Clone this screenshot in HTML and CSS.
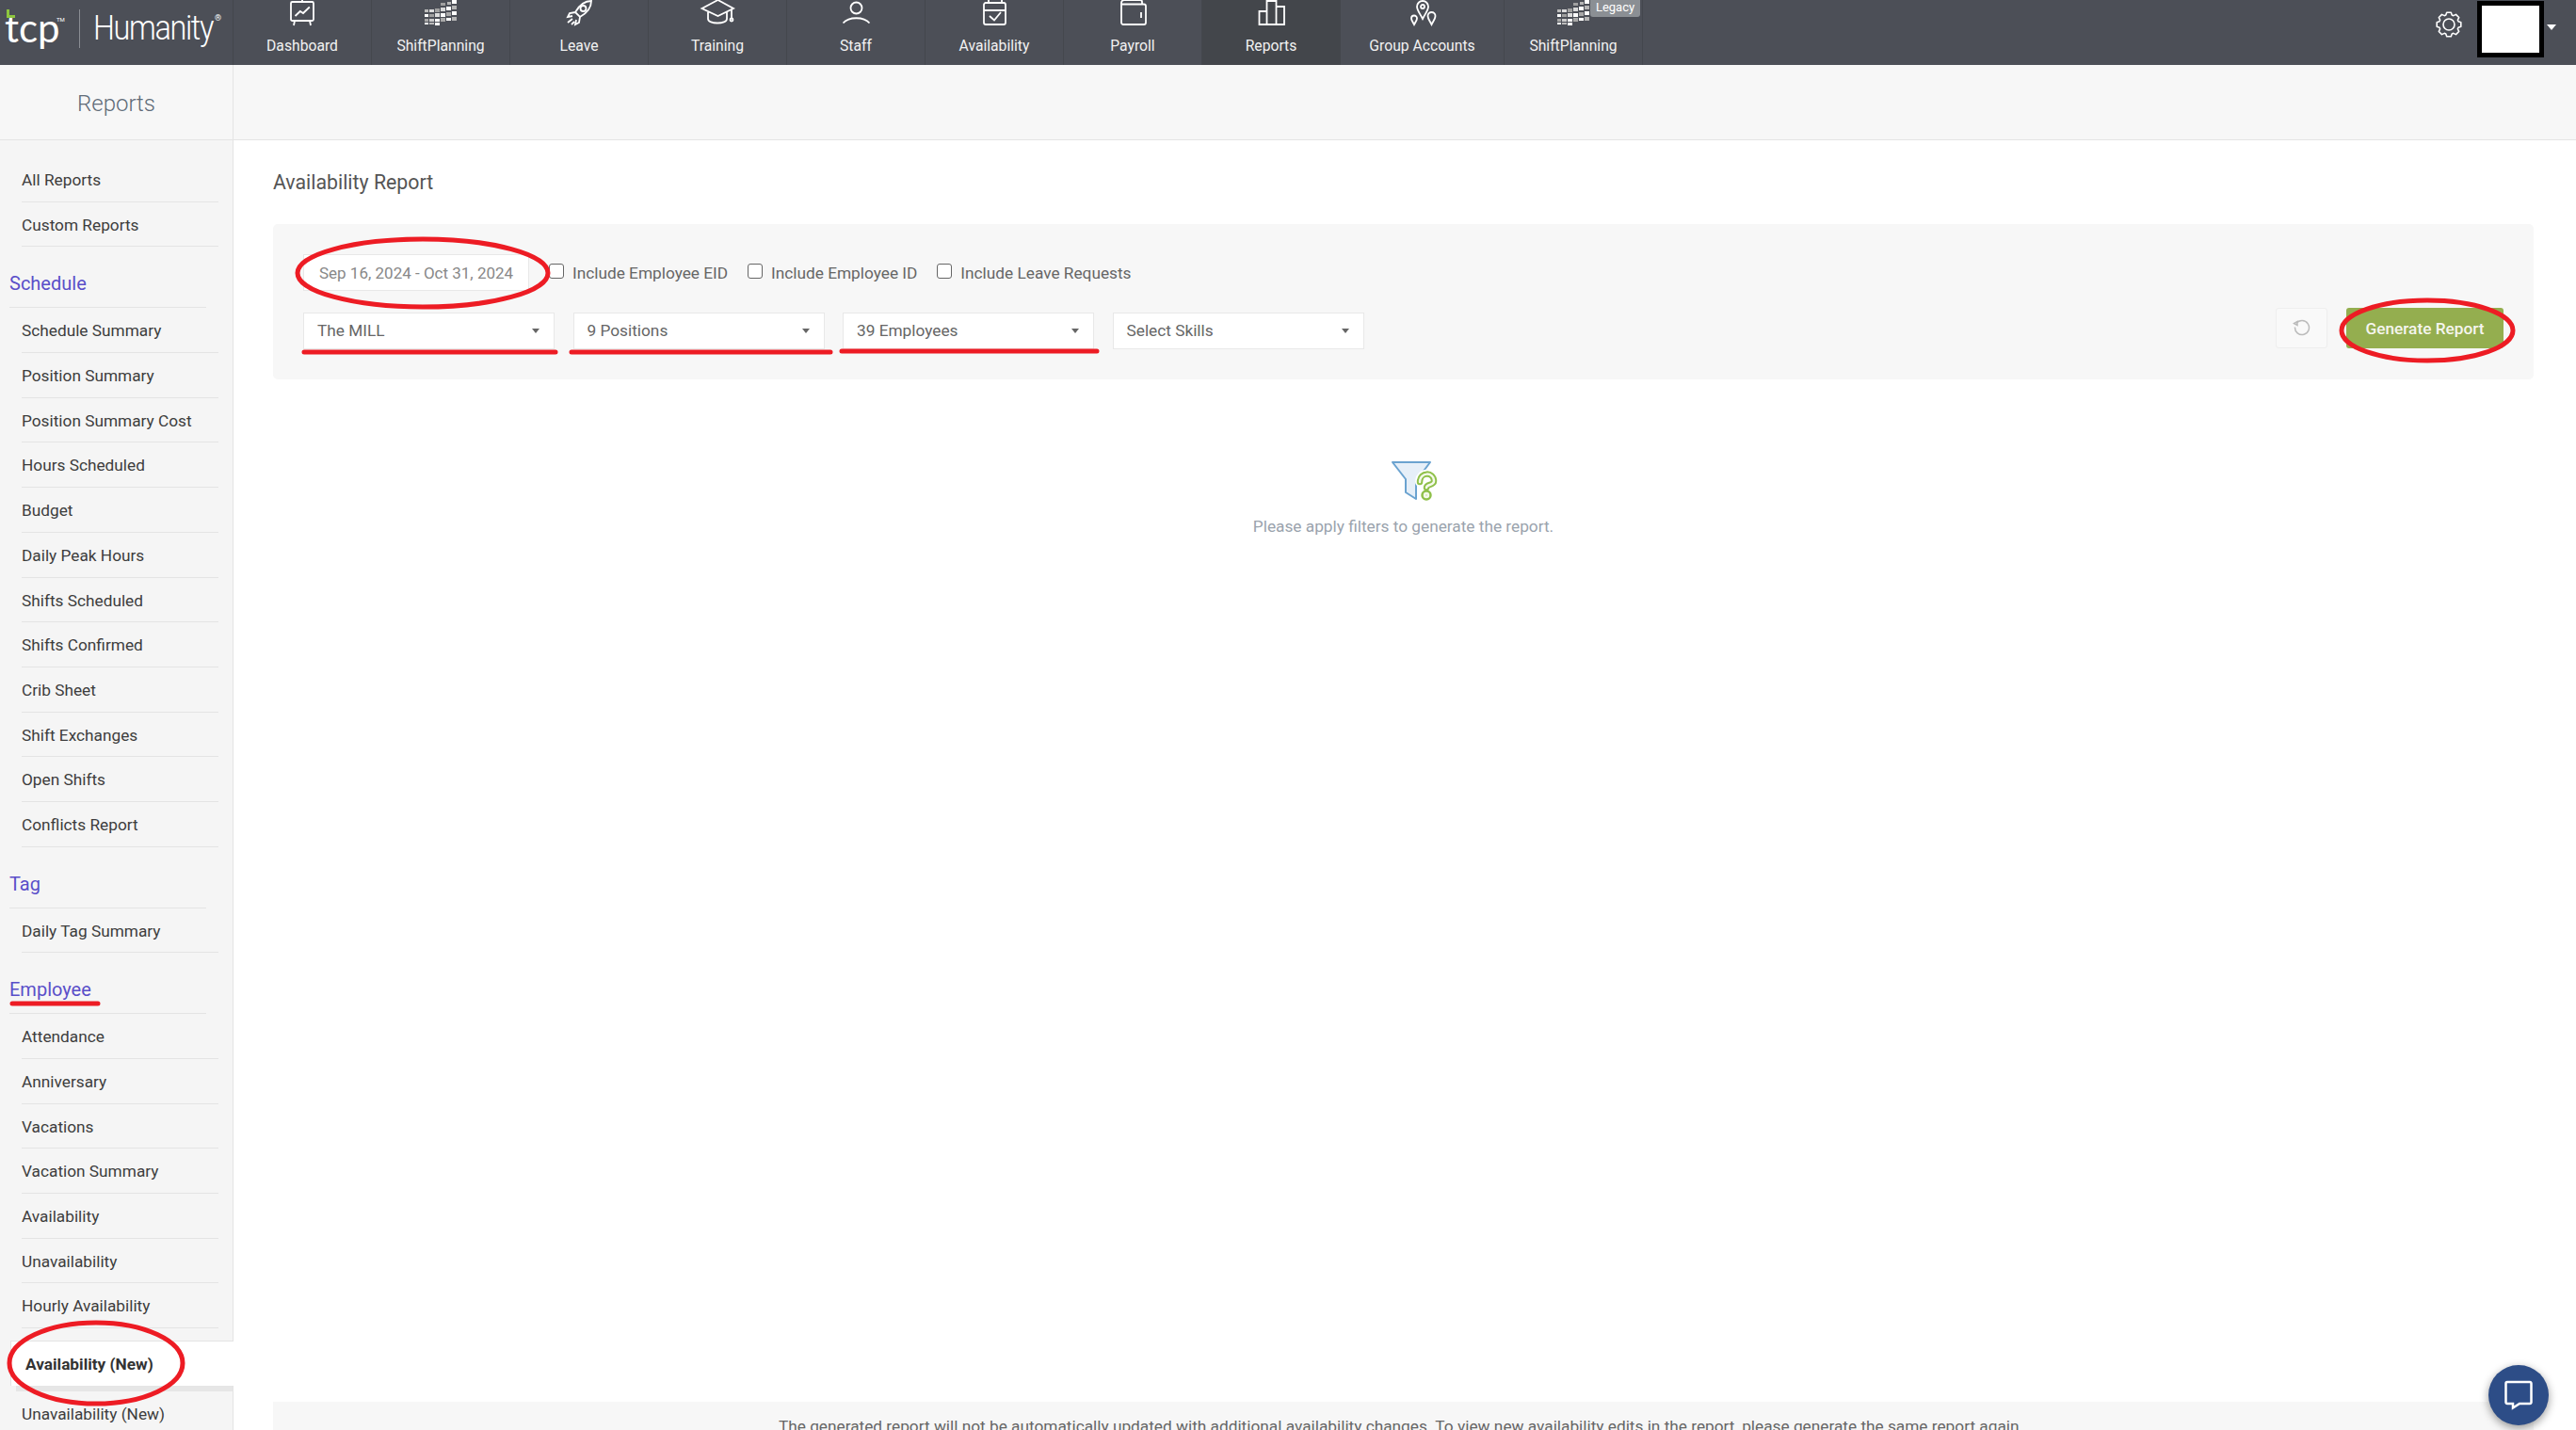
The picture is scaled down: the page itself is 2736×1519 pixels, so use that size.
FILE: index.html
```html
<!DOCTYPE html>
<html lang="en">
<head>
    <meta charset="UTF-8">
    <meta name="viewport" content="width=device-width, initial-scale=1.0">
    <title>Availability Report</title>
    <link rel="stylesheet" href="styles.css">
</head>
<body>
    <!-- shared block grid for both ShiftPlanning icons -->
    <svg class="defs" width="0" height="0">
        <symbol id="blocks" viewBox="0 0 40 28">
            <g fill="#fff">
                <rect x="32" y="0" width="5" height="4"/><rect x="27" y="2" width="4" height="3" fill="#b5b5b5"/>
                <rect x="20" y="3" width="5" height="3" fill="#a0a0a0"/>
                <rect x="32" y="6" width="5" height="4" fill="#b5b5b5"/><rect x="26" y="7" width="5" height="4"/>
                <rect x="20" y="8" width="5" height="4" fill="#d8d8d8"/><rect x="14" y="9" width="5" height="4" fill="#a0a0a0"/>
                <rect x="8" y="10" width="5" height="3" fill="#ddd"/><rect x="3" y="10" width="4" height="3" fill="#bbb"/>
                <rect x="32" y="12" width="5" height="4"/><rect x="26" y="13" width="5" height="4" fill="#a8a8a8"/>
                <rect x="20" y="14" width="5" height="4"/><rect x="14" y="14" width="5" height="4" fill="#ddd"/>
                <rect x="8" y="15" width="5" height="3" fill="#a0a0a0"/><rect x="3" y="15" width="4" height="3"/>
                <rect x="32" y="18" width="5" height="4" fill="#b5b5b5"/><rect x="26" y="19" width="5" height="3"/>
                <rect x="20" y="19" width="5" height="4" fill="#a8a8a8"/><rect x="14" y="20" width="5" height="3"/>
                <rect x="8" y="20" width="5" height="3" fill="#ccc"/><rect x="3" y="20" width="4" height="3" fill="#a8a8a8"/>
                <rect x="14" y="24" width="5" height="3"/><rect x="8" y="24" width="5" height="2" fill="#bbb"/>
                <rect x="3" y="24" width="4" height="2"/>
            </g>
        </symbol>
    </svg>

    <header class="topbar">
        <a class="logo">
            <span class="logo-tcp">tcp</span><span class="logo-tm">TM</span>
            <span class="logo-mark"></span>
            <span class="logo-line"></span>
            <span class="logo-name">Humanity</span><span class="logo-reg">®</span>
        </a>
        <nav class="mainnav">
            <a class="nav-item">
                <svg class="nav-icon" viewBox="0 0 40 28"><path d="M20 0v2M9.5 2h21a1.5 1.5 0 0 1 1.5 1.5v17a1.5 1.5 0 0 1-1.5 1.5h-21a1.5 1.5 0 0 1-1.5-1.5v-17a1.5 1.5 0 0 1 1.500-1.500zM12 22l-1 5M28 22l1 5M12.500 17l5.300-5 3.200 2 6.800-6.500"/></svg>
                <span>Dashboard</span>
            </a>
            <a class="nav-item">
                <svg class="nav-icon nav-blocks"><use href="#blocks"/></svg>
                <span>ShiftPlanning</span>
            </a>
            <a class="nav-item">
                <svg class="nav-icon" viewBox="0 0 40 28"><path d="M33 1c-7 0-13 5-17 12l5 5c7-4 12-10 12-17zM16 13l-6 1-2 4 5-1M21 18l-1 6-4 2 1-5M8 24l5-4M12 26l3-3"/><circle cx="24.500" cy="9" r="3"/></svg>
                <span>Leave</span>
            </a>
            <a class="nav-item">
                <svg class="nav-icon" viewBox="0 0 40 28"><path d="M3.500 9L20.500 0 37 9l-16.500 8zM10 13v7c0 6 20 6 20 0v-7M35 10v9"/><circle cx="35" cy="21" r="1.500"/></svg>
                <span>Training</span>
            </a>
            <a class="nav-item">
                <svg class="nav-icon" viewBox="0 0 40 28"><circle cx="20.500" cy="8.500" r="6"/><path d="M6.500 24.500c6-7 22-7 28 0"/></svg>
                <span>Staff</span>
            </a>
            <a class="nav-item">
                <svg class="nav-icon" viewBox="0 0 40 28"><path d="M11 3h19a2 2 0 0 1 2 2v19a2 2 0 0 1-2 2H11a2 2 0 0 1-2-2V5a2 2 0 0 1 2-2zM9 11h23M14 3V0M28 3V0M15 17l5 4.500 7-8.500"/></svg>
                <span>Availability</span>
            </a>
            <a class="nav-item">
                <svg class="nav-icon" viewBox="0 0 40 28"><path d="M8 4.500h24a2 2 0 0 1 2 2V24a2 2 0 0 1-2 2H10a2 2 0 0 1-2-2V3a3 3 0 0 1 3-3h17a2 2 0 0 1 2 2v2.500M29 13v6"/></svg>
                <span>Payroll</span>
            </a>
            <a class="nav-item active">
                <svg class="nav-icon" viewBox="0 0 40 28"><path d="M7.500 12h8v14h-8zM15.500 1h10v25h-10zM25.500 7H34v19h-8.500z"/></svg>
                <span>Reports</span>
            </a>
            <a class="nav-item wide">
                <svg class="nav-icon" viewBox="0 0 40 28"><path d="M20 20c-3-6-6-9-6-13a6 6 0 0 1 12 0c0 4-3 7-6 13zM11 26c-1.500-3-3-4.500-3-6.500a3 3 0 0 1 6 0c0 2-1.500 3.500-3 6.500zM29.500 26c-2-4-4-6-4-9a4 4 0 0 1 8 0c0 3-2 5-4 9z"/><circle cx="20" cy="7" r="2"/></svg>
                <span>Group Accounts</span>
            </a>
            <a class="nav-item">
                <svg class="nav-icon nav-blocks"><use href="#blocks"/></svg>
                <span>ShiftPlanning</span>
                <em class="legacy">Legacy</em>
            </a>
        </nav>
        <div class="user-tools">
            <svg class="gear" viewBox="-15 -15 30 30"><path d="M2.260-12.800L3.240-9.990 4.770-9.360 7.460-10.650 10.650-7.460 9.360-4.770 9.990-3.240 12.800-2.260V2.260L9.990 3.240 9.360 4.770 10.650 7.460 7.460 10.650 4.770 9.360 3.240 9.990 2.260 12.800H-2.260L-3.240 9.990-4.770 9.360-7.460 10.650-10.650 7.460-9.360 4.770-9.990 3.240-12.800 2.260V-2.260L-9.990-3.240-9.360-4.770-10.650-7.460-7.460-10.650-4.770-9.360-3.240-9.990-2.260-12.800z"/><circle r="6"/></svg>
            <div class="avatar"></div>
            <span class="user-caret"></span>
        </div>
    </header>

    <div class="subbar">
        <div class="subbar-title">Reports</div>
    </div>

    <div class="layout">
        <aside class="sidebar">
            <ul class="side-list">
                <li>All Reports</li>
                <li>Custom Reports</li>
            </ul>
            <h3 class="side-head">Schedule</h3>
            <ul class="side-list">
                <li>Schedule Summary</li>
                <li>Position Summary</li>
                <li>Position Summary Cost</li>
                <li>Hours Scheduled</li>
                <li>Budget</li>
                <li>Daily Peak Hours</li>
                <li>Shifts Scheduled</li>
                <li>Shifts Confirmed</li>
                <li>Crib Sheet</li>
                <li>Shift Exchanges</li>
                <li>Open Shifts</li>
                <li>Conflicts Report</li>
            </ul>
            <h3 class="side-head">Tag</h3>
            <ul class="side-list">
                <li>Daily Tag Summary</li>
            </ul>
            <h3 class="side-head">Employee</h3>
            <ul class="side-list">
                <li>Attendance</li>
                <li>Anniversary</li>
                <li>Vacations</li>
                <li>Vacation Summary</li>
                <li>Availability</li>
                <li>Unavailability</li>
                <li>Hourly Availability</li>
                <li class="current">Availability (New)</li>
                <li>Unavailability (New)</li>
            </ul>
        </aside>

        <main class="content">
            <h2 class="page-title">Availability Report</h2>

            <section class="filters">
                <div class="filter-row">
                    <div class="date-input">Sep 16, 2024 - Oct 31, 2024</div>
                    <label class="check"><input type="checkbox">Include Employee EID</label>
                    <label class="check"><input type="checkbox">Include Employee ID</label>
                    <label class="check"><input type="checkbox">Include Leave Requests</label>
                </div>
                <div class="filter-row second">
                    <div class="select">The MILL</div>
                    <div class="select">9 Positions</div>
                    <div class="select">39 Employees</div>
                    <div class="select">Select Skills</div>
                    <div class="actions">
                        <button class="btn-reset">
                            <svg viewBox="0 0 20 20"><path d="M4 6.500a7.500 7.500 0 1 1-1.500 4M1.500 6.500l3.500 2V4.500z"/></svg>
                        </button>
                        <button class="btn-generate">Generate Report</button>
                    </div>
                </div>
            </section>

            <div class="empty">
                <svg class="empty-icon" viewBox="0 0 50 44">
                    <path class="funnel" d="M2 2h40l-15 20v19l-11-7V20z"/>
                    <path class="q-halo" d="M31 23c0-11 15-11 15-1 0 5-8 3-8 7"/>
                    <circle class="q-halo" cx="38" cy="37" r="3"/>
                    <path class="q-outer" d="M31 23c0-11 15-11 15-1 0 5-8 3-8 7"/>
                    <circle class="q-outer" cx="38" cy="37" r="2.500"/>
                    <path class="q-inner" d="M31 23c0-11 15-11 15-1 0 5-8 3-8 7"/>
                    <circle class="q-inner" cx="38" cy="37" r="2"/>
                </svg>
                <p>Please apply filters to generate the report.</p>
            </div>

            <div class="note">The generated report will not be automatically updated with additional availability changes. To view new availability edits in the report, please generate the same report again.</div>
        </main>
    </div>

    <button class="chat">
        <svg viewBox="0 0 32 32"><path d="M4 2h24a1.500 1.500 0 0 1 1.500 1.500v20a1.500 1.500 0 0 1-1.500 1.500H17l-7 4.500V25H4a1.500 1.500 0 0 1-1.500-1.500v-20A1.500 1.500 0 0 1 4 2z"/></svg>
    </button>

    <!-- red marks someone drew on top of the screenshot -->
    <svg class="marks" viewBox="0 0 2736 1519">
        <ellipse cx="449" cy="290" rx="133" ry="36"/>
        <ellipse cx="2578" cy="351" rx="91" ry="32"/>
        <ellipse cx="102" cy="1448" rx="92" ry="43"/>
        <path d="M323 374H590M607 374H882M894 373H1165M13 1066H104"/>
    </svg>
</body>
</html>
```

FILE: styles.css
```css
* {
    box-sizing: border-box;
}

html, body {
    height: 100%;
}

body {
    position: relative;
    display: flex;
    flex-direction: column;
    margin: 0;
    overflow: hidden;
    font-family: Roboto, sans-serif;
    font-size: 17.25px;
    color: #444;
    background-color: #fff;
}

.defs {
    position: absolute;
}

/* top bar */

.topbar {
    display: flex;
    flex: none;
    height: 69px;
    background-color: #4c4f57;
    color: #fff;
}

.logo {
    position: relative;
    flex: none;
    width: 248px;
    border-right: 1px solid #44474d;
}

.logo-mark {
    position: absolute;
    left: 7px;
    top: 10px;
    width: 9px;
    height: 9px;
    border-left: 3px solid #8dc63f;
    border-bottom: 3px solid #8dc63f;
}

.logo-tcp {
    position: absolute;
    left: 5px;
    top: 6px;
    font-family: Lato, sans-serif;
    font-size: 42px;
    line-height: 46px;
}

.logo-tm {
    position: absolute;
    left: 60px;
    top: 17px;
    font-size: 6px;
}

.logo-line {
    position: absolute;
    left: 84px;
    top: 10px;
    width: 1px;
    height: 41px;
    background-color: #8a8d93;
}

.logo-name {
    position: absolute;
    left: 99px;
    top: 8px;
    font-size: 36px;
    font-weight: 300;
    line-height: 44px;
    letter-spacing: -1.500px;
    transform: scaleX(0.9);
    transform-origin: left;
}

.logo-reg {
    position: absolute;
    left: 228px;
    top: 14px;
    font-size: 9px;
}

.mainnav {
    display: flex;
}

.nav-item {
    position: relative;
    display: flex;
    flex-direction: column;
    align-items: center;
    width: 147px;
    border-right: 1px solid #44474d;
    font-size: 15.700px;
    line-height: 20px;
    color: #f2f2f2;
}

.nav-item.wide {
    width: 174px;
}

.nav-item.active {
    background-color: #43464b;
}

.nav-icon {
    width: 40px;
    height: 28px;
    margin-bottom: 11px;
    fill: none;
    stroke: #fff;
    stroke-width: 1.8;
    overflow: visible;
}

.nav-blocks {
    stroke: none;
}

.legacy {
    position: absolute;
    left: 91px;
    top: 0;
    width: 53px;
    height: 18px;
    border-radius: 0 0 3px 3px;
    background-color: #8b8f94;
    font-size: 13px;
    font-style: normal;
    line-height: 16px;
    text-align: center;
    color: #fff;
}

.user-tools {
    display: flex;
    align-items: flex-start;
    margin-left: auto;
    padding-right: 21px;
}

.gear {
    width: 30px;
    height: 30px;
    margin-top: 11px;
    margin-right: 15px;
    fill: none;
    stroke: #fff;
    stroke-width: 1.600;
    stroke-linejoin: round;
}

.avatar {
    width: 71px;
    height: 60px;
    margin-top: 1px;
    border: 5px solid #000;
    background-color: #fff;
}

.user-caret {
    margin-top: 26px;
    margin-left: 3px;
    border-top: 6px solid #fff;
    border-left: 5px solid transparent;
    border-right: 5px solid transparent;
}

/* grey strip under the bar */

.subbar {
    flex: none;
    height: 80px;
    border-bottom: 1px solid #e4e4e4;
    background-color: #f7f7f7;
}

.subbar-title {
    width: 248px;
    height: 79px;
    border-right: 1px solid #e4e4e4;
    font-size: 24px;
    font-weight: 300;
    line-height: 83px;
    text-align: center;
    color: #5f6b78;
}

.layout {
    display: flex;
    flex: 1;
    min-height: 0;
}

/* sidebar */

.sidebar {
    flex: none;
    width: 248px;
    padding-top: 18px;
    border-right: 1px solid #e4e4e4;
    background-color: #f5f5f5;
}

.side-list {
    margin: 0;
    padding: 0;
    list-style: none;
}

.side-list li {
    height: 47.700px;
    margin: 0 15px 0 23px;
    border-bottom: 1px solid #e4e4e4;
    font-size: 17.250px;
    line-height: 49.500px;
    color: #3d3d3d;
}

.side-head {
    height: 65px;
    margin: 0 28px 0 10px;
    padding-top: 26px;
    border-bottom: 1px solid #e4e4e4;
    font-size: 20px;
    font-weight: 400;
    line-height: 26px;
    color: #5a4fc9;
}

.side-list li.current {
    position: relative;
    height: 48px;
    margin: 12.400px -1px 6px 11px;
    padding-left: 15px;
    border: 1px solid #e4e4e4;
    border-right: none;
    border-bottom: none;
    background-color: #fff;
    font-weight: 700;
    line-height: 48px;
    color: #333;
}

.side-list li.current::after {
    content: "";
    position: absolute;
    left: 5px;
    right: 1px;
    top: 100%;
    height: 6px;
    background-color: #e6e6e6;
}

/* main area */

.content {
    display: flex;
    flex-direction: column;
    flex: 1;
    min-width: 0;
    padding: 31px 45px 0 42px;
}

.page-title {
    margin: 0 0 30px;
    font-size: 21.300px;
    font-weight: 400;
    line-height: 28px;
    color: #555;
}

.filters {
    height: 165px;
    padding: 32px;
    border-radius: 5px;
    background-color: #f7f7f7;
}

.filter-row {
    display: flex;
    align-items: center;
}

.filter-row.second {
    align-items: flex-start;
    margin-top: 18px;
}

.date-input {
    flex: none;
    width: 240px;
    height: 39px;
    padding-left: 16px;
    border: 1px solid #e8e8e8;
    background-color: #fff;
    font-size: 17px;
    line-height: 39px;
    color: #888;
}

.check {
    display: flex;
    align-items: center;
    margin-left: 21px;
    line-height: 24px;
    color: #666;
}

.check input {
    appearance: none;
    width: 16px;
    height: 16px;
    margin: -4px 9px 0 0;
    border: 1px solid #666;
    border-radius: 3px;
    background-color: #fff;
}

.select {
    position: relative;
    width: 267px;
    height: 39px;
    margin-top: 5px;
    margin-right: 19.500px;
    padding-left: 14px;
    border: 1px solid #e8e8e8;
    background-color: #fff;
    line-height: 37px;
    color: #666;
}

.select::after {
    content: "";
    position: absolute;
    right: 15px;
    top: 16px;
    border-top: 5px solid #666;
    border-left: 4px solid transparent;
    border-right: 4px solid transparent;
}

.actions {
    display: flex;
    gap: 20px;
    margin-left: auto;
}

.btn-reset {
    width: 55px;
    height: 43px;
    padding: 0 0 3px;
    border: 1px solid #eee;
    border-radius: 3px;
    background-color: #f9f9f9;
}

.btn-reset svg {
    display: block;
    width: 20px;
    height: 20px;
    margin: 0 auto;
    fill: none;
    stroke: #bbb;
    stroke-width: 1.500;
}

.btn-generate {
    width: 167px;
    height: 43px;
    padding: 0;
    border: none;
    border-radius: 3px;
    background-color: #94ae4f;
    font-family: Roboto, sans-serif;
    font-size: 17.250px;
    font-weight: 500;
    color: #f5f5ee;
}

.empty {
    display: flex;
    flex-direction: column;
    align-items: center;
    margin-top: 86px;
}

.empty-icon {
    width: 50px;
    height: 44px;
    margin-left: 22px;
}

.funnel {
    fill: #e6eff8;
    stroke: #6ba3d0;
    stroke-width: 2;
    stroke-linejoin: round;
}

.q-halo, .q-outer, .q-inner {
    fill: none;
    stroke-linecap: round;
}

.q-halo {
    stroke: #fff;
    stroke-width: 10;
}

.q-outer {
    stroke: #8fc04a;
    stroke-width: 6.500;
}

.q-inner {
    stroke: #f4f9ea;
    stroke-width: 2.500;
}

.empty p {
    margin: 14px 0 0;
    line-height: 24px;
    color: #9aa3ad;
}

.note {
    flex: none;
    height: 30px;
    margin-top: auto;
    padding: 14px 5px 0 0;
    overflow: hidden;
    background-color: #f7f7f7;
    line-height: 24px;
    text-align: center;
    white-space: nowrap;
    color: #666;
}

/* floating bits */

.chat {
    position: absolute;
    right: 29px;
    bottom: 5px;
    width: 64px;
    height: 64px;
    padding: 16px;
    border: none;
    border-radius: 50%;
    background-color: #2d4d87;
    box-shadow: 0 3px 10px rgba(0, 0, 0, 0.4);
}

.chat svg {
    display: block;
    fill: none;
    stroke: #fff;
    stroke-width: 2.500;
}

.marks {
    position: absolute;
    left: 0;
    top: 0;
    width: 2736px;
    height: 1519px;
    pointer-events: none;
    fill: none;
    stroke: #ed1c24;
    stroke-width: 5;
    stroke-linecap: round;
}
```
